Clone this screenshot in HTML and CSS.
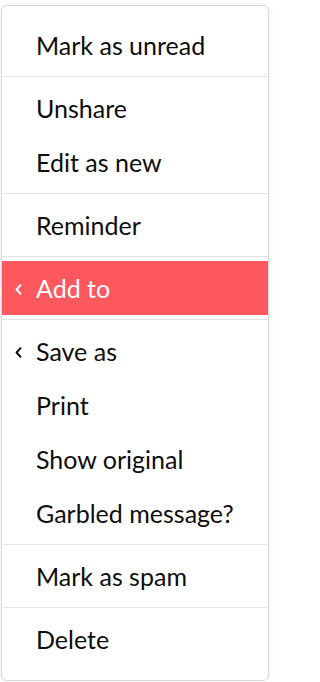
FILE: index.html
```html
<!DOCTYPE html>
<html lang="en">
<head>
<meta charset="utf-8">
<title>Message menu</title>
<link rel="stylesheet" href="styles.css">
</head>
<body>
<div class="menu">
  <div class="item"><span class="icon"></span><span class="label">Mark as unread</span></div>
  <div class="sep"></div>
  <div class="item"><span class="icon"></span><span class="label">Unshare</span></div>
  <div class="item"><span class="icon"></span><span class="label">Edit as new</span></div>
  <div class="sep"></div>
  <div class="item"><span class="icon"></span><span class="label">Reminder</span></div>
  <div class="sep"></div>
  <div class="item active"><span class="icon"><svg viewBox="0 0 7 11" width="7" height="11"><polyline points="5.5,1.2 1.6,5.5 5.5,9.8" fill="none" stroke="currentColor" stroke-width="2" stroke-linecap="round" stroke-linejoin="round"/></svg></span><span class="label">Add to</span></div>
  <div class="sep"></div>
  <div class="item"><span class="icon"><svg viewBox="0 0 7 11" width="7" height="11"><polyline points="5.5,1.2 1.6,5.5 5.5,9.8" fill="none" stroke="currentColor" stroke-width="2" stroke-linecap="round" stroke-linejoin="round"/></svg></span><span class="label">Save as</span></div>
  <div class="item"><span class="icon"></span><span class="label">Print</span></div>
  <div class="item"><span class="icon"></span><span class="label">Show original</span></div>
  <div class="item"><span class="icon"></span><span class="label">Garbled message?</span></div>
  <div class="sep"></div>
  <div class="item"><span class="icon"></span><span class="label">Mark as spam</span></div>
  <div class="sep"></div>
  <div class="item"><span class="icon"></span><span class="label">Delete</span></div>
</div>
</body>
</html>
```

FILE: styles.css
```css
html, body {
  margin: 0;
  padding: 0;
  background: #ffffff;
}

body {
  font-family: Lato, "Noto Sans", sans-serif;
  color: #0d0d0d;
}

.menu {
  width: 268px;
  height: 676px;
  margin: 5px 0 0 1px;
  border: 1px solid #d8d8d8;
  border-radius: 6px;
  padding: 12px 0 0 0;
  background: #ffffff;
  box-shadow: 0 0 6px rgba(0, 0, 0, 0.08);
  box-sizing: border-box;
}

.item {
  height: 54px;
  display: grid;
  grid-template-columns: 34px 1fr;
  align-items: center;
  font-size: 25px;
  line-height: 1;
}

.icon {
  display: flex;
  align-items: center;
  padding-left: 13px;
  padding-top: 3px;
}

.icon svg {
  display: block;
}

.label {
  white-space: nowrap;
}

.item.active {
  background: #fd585d;
  color: #ffffff;
}

.sep {
  height: 1px;
  margin: 4px 0 4px 0;
  background: #e4e4e4;
}
```
